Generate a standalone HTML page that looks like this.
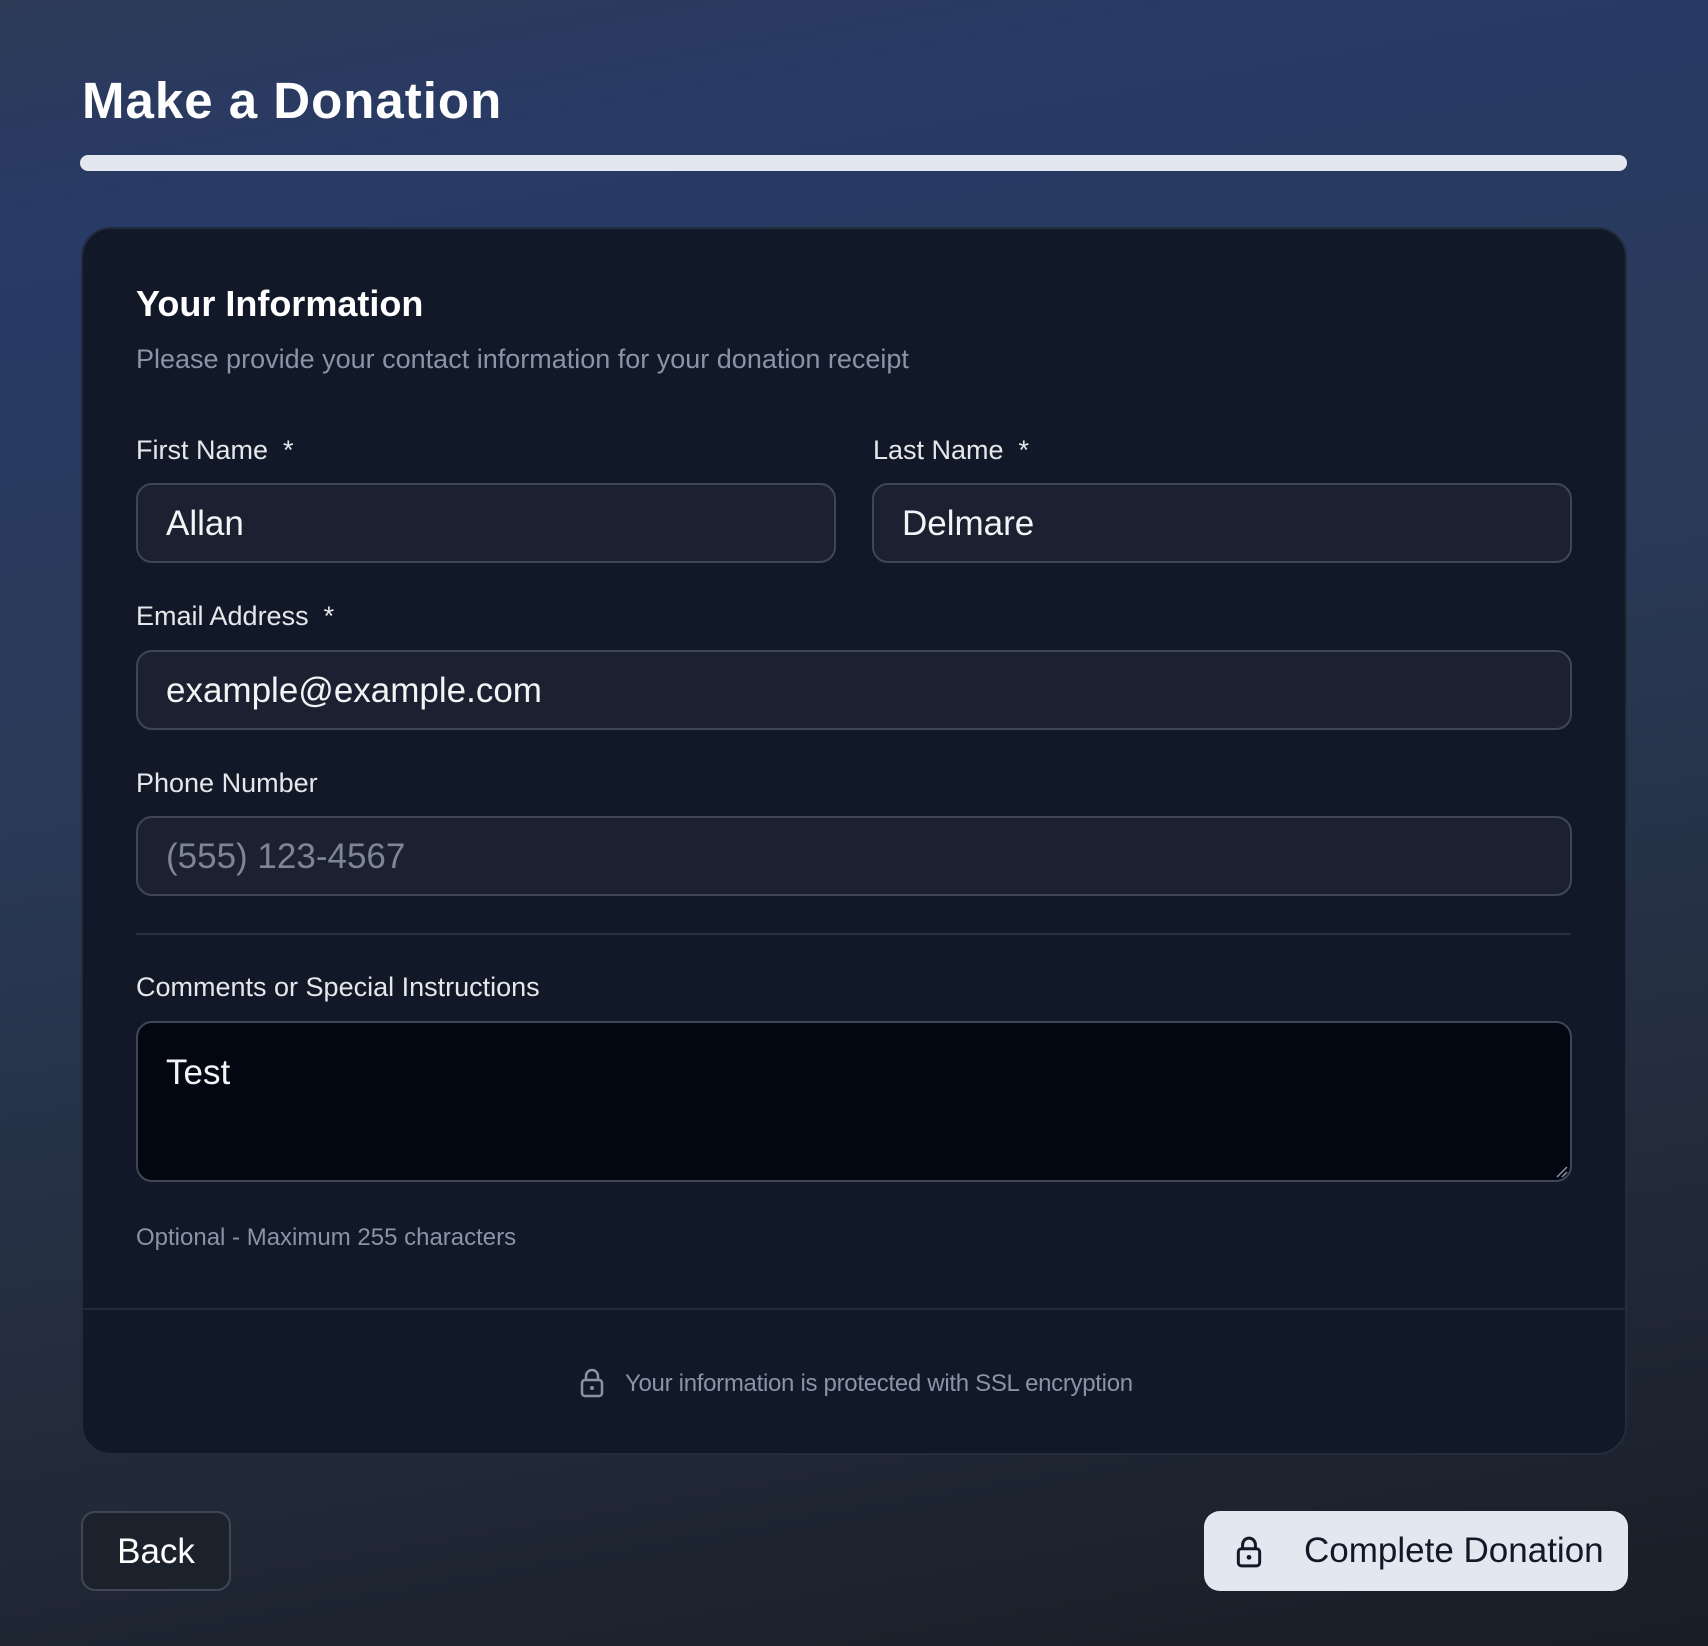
<!DOCTYPE html>
<html><head><meta charset="utf-8"><style>
*{box-sizing:border-box;margin:0;padding:0}
body{width:1708px;height:1646px;overflow:hidden;font-family:"Liberation Sans",sans-serif;background:linear-gradient(170deg,#2d3b57 0%,#283a66 12%,#2a3a58 40%,#232b3a 75%,#181d26 100%);position:relative;color:#fff}
.abs{position:absolute}
h1{position:absolute;left:82px;top:71px;font-size:51px;font-weight:bold;letter-spacing:1px}
.bar{left:80px;top:155px;width:1547px;height:16px;border-radius:8px;background:#e2e7f0}
.card{left:81px;top:227px;width:1546px;height:1228px;border-radius:30px;background:#111827;border:2px solid #232c3d}
.h2{left:136px;top:283px;font-size:36px;font-weight:bold}
.sub{left:136px;top:344px;font-size:27px;color:#8a94a6}
.lbl{font-size:27px;color:#e5e7eb}
.inp{height:80px;border:2px solid #3f4757;border-radius:16px;background:#1b2130;font-size:35px;padding-left:28px;line-height:78px;color:#f3f4f6}
.div{left:136px;width:1435px;height:2px;background:#273041}
</style></head><body>
<h1>Make a Donation</h1>
<div class="abs bar"></div>
<div class="abs card"></div>
<div class="abs h2">Your Information</div>
<div class="abs sub">Please provide your contact information for your donation receipt</div>
<div class="abs lbl" style="left:136px;top:435px">First Name&nbsp; *</div>
<div class="abs lbl" style="left:873px;top:435px">Last Name&nbsp; *</div>
<div class="abs inp" style="left:136px;top:483px;width:700px">Allan</div>
<div class="abs inp" style="left:872px;top:483px;width:700px">Delmare</div>
<div class="abs lbl" style="left:136px;top:601px">Email Address&nbsp; *</div>
<div class="abs inp" style="left:136px;top:650px;width:1436px">example@example.com</div>
<div class="abs lbl" style="left:136px;top:768px">Phone Number</div>
<div class="abs inp" style="left:136px;top:816px;width:1436px;color:#7d8596">(555) 123-4567</div>
<div class="abs div" style="top:933px"></div>
<div class="abs lbl" style="left:136px;top:972px">Comments or Special Instructions</div>
<div class="abs inp" style="left:136px;top:1021px;width:1436px;height:161px;background:#030712;line-height:1;padding-top:32px">Test</div>
<svg class="abs" style="left:1554px;top:1164px" width="14" height="14" viewBox="0 0 14 14"><path d="M13 3L3 13M13 8L8 13" stroke="#8a94a6" stroke-width="1.5"/></svg>
<div class="abs" style="left:136px;top:1224px;font-size:24px;color:#8a94a6">Optional - Maximum 255 characters</div>
<div class="abs" style="left:82px;top:1308px;width:1544px;height:2px;background:#222b3b"></div>
<svg class="abs" style="left:580px;top:1368px" width="24" height="30" viewBox="0 0 24 30"><rect x="2" y="12" width="20" height="16" rx="3" fill="none" stroke="#8a94a6" stroke-width="2.5"/><path d="M6 12V8a6 6 0 0 1 12 0v4" fill="none" stroke="#8a94a6" stroke-width="2.5"/><circle cx="12" cy="20" r="2" fill="#8a94a6"/></svg>
<div class="abs" style="left:625px;top:1370px;font-size:24px;color:#8a94a6;letter-spacing:-0.3px">Your information is protected with SSL encryption</div>
<div class="abs" style="left:81px;top:1511px;width:150px;height:80px;border:2px solid #3f4757;border-radius:14px;background:#1c222c;font-size:35px;text-align:center;line-height:78px">Back</div>
<div class="abs" style="left:1204px;top:1511px;width:424px;height:80px;border-radius:16px;background:#e2e7f0;color:#111827;font-size:35px;line-height:80px;padding-left:100px">Complete Donation</div>
<svg class="abs" style="left:1236px;top:1536px" width="26" height="32" viewBox="0 0 24 30"><rect x="2" y="12" width="20" height="16" rx="3" fill="none" stroke="#111827" stroke-width="2.8"/><path d="M6 12V8a6 6 0 0 1 12 0v4" fill="none" stroke="#111827" stroke-width="2.8"/><circle cx="12" cy="20" r="2.2" fill="#111827"/></svg>
</body></html>
